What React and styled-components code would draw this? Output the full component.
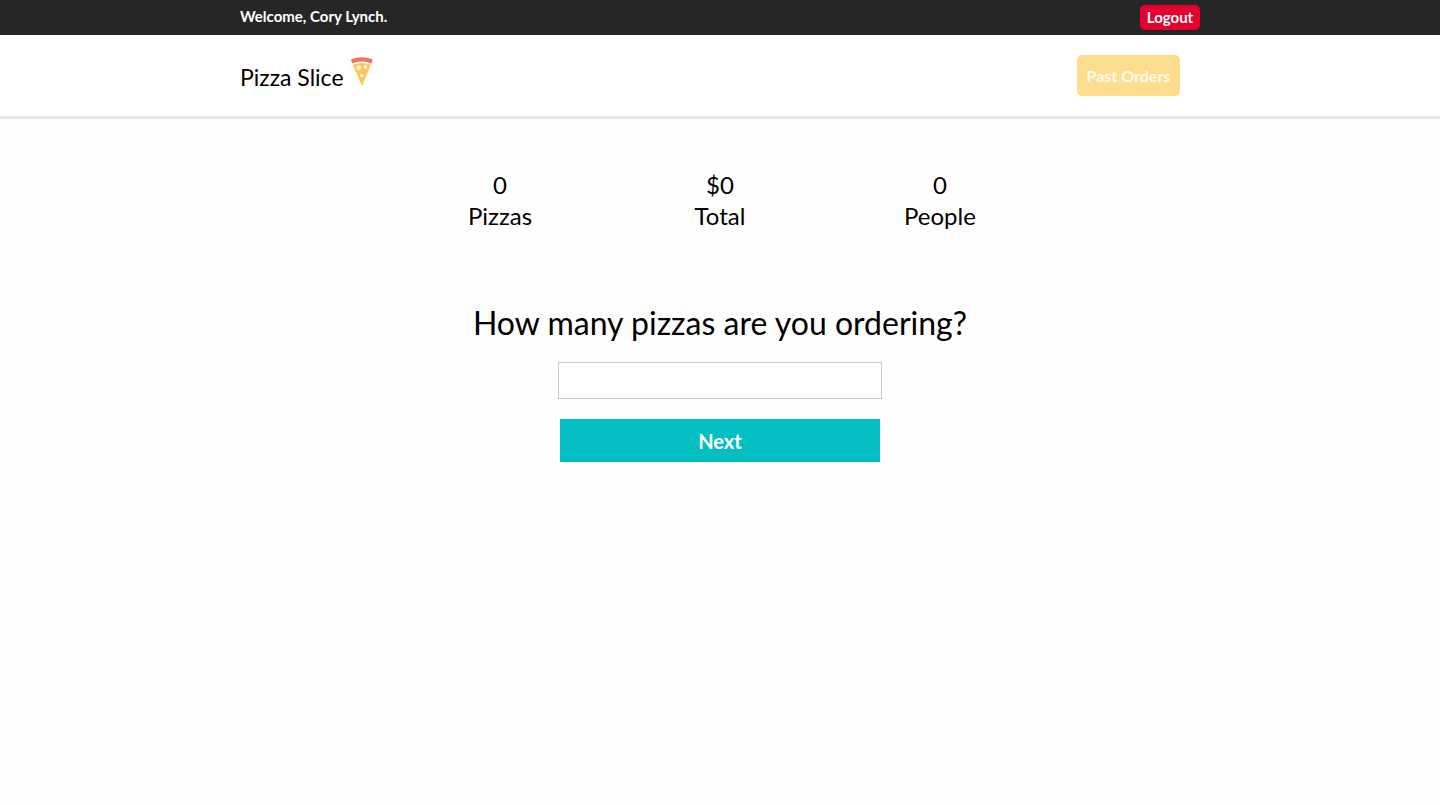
import React from "react";
import styled, { createGlobalStyle } from "styled-components";

const GlobalStyle = createGlobalStyle`
  *, *::before, *::after { box-sizing: border-box; }
  body {
    margin: 0;
    background: #fefefe;
    color: #000;
    font-family: Lato, "Open Sans", sans-serif;
    font-size: 16px;
  }
  p, dl, dd { margin: 0; }
  button, input { font-family: inherit; }
`;

const TopBar = styled.div`
  background: #262626;
  color: #fff;
`;

const Container = styled.div`
  display: flex;
  align-items: flex-start;
  justify-content: space-between;
  width: 100%;
  max-width: 960px;
  margin: 0 auto;
  padding: ${({ $pad }) => $pad};
`;

const Welcome = styled.p`
  font-size: 15px;
  font-weight: 700;
  line-height: 22px;
`;

const LogoutButton = styled.button`
  height: 25px;
  width: 60px;
  padding: 0;
  border: 0;
  border-radius: 5px;
  background: #e6002e;
  color: #fff;
  font-size: 15px;
  font-weight: 700;
  line-height: 25px;
  cursor: pointer;
`;

const Header = styled.header`
  background: #fff;
  border-bottom: 3px solid #e7e7e7;
`;

const Brand = styled.a`
  display: flex;
  align-items: flex-start;
  gap: 7px;
  padding-top: 2px;
  color: #000;
  font-size: 23px;
  line-height: 30px;
  text-decoration: none;
`;

const BrandName = styled.span`
  padding-top: 5px;
`;

const PastOrders = styled.a`
  width: 103px;
  padding: 11px 0 10px;
  border-radius: 5px;
  background: #ffdd8e;
  color: #fffaf0;
  font-size: 16px;
  font-weight: 700;
  line-height: 20px;
  text-align: center;
  text-decoration: none;
`;

const Main = styled.main`
  padding: 50px 20px;
`;

const Stats = styled.dl`
  display: grid;
  grid-template-columns: repeat(3, 1fr);
  max-width: 660px;
  margin: 0 auto;
  font-size: 24px;
  line-height: 31px;
  text-align: center;
`;

const Stat = styled.div`
  display: flex;
  flex-direction: column-reverse;
`;

const OrderForm = styled.form`
  display: flex;
  flex-direction: column;
  align-items: center;
  gap: 20px;
  margin-top: 73px;
`;

const Question = styled.label`
  font-size: 32px;
  line-height: 38px;
  text-align: center;
`;

const CountInput = styled.input`
  width: 324px;
  max-width: 100%;
  height: 37px;
  padding: 0 8px;
  border: 1px solid #c8c8c8;
  border-radius: 0;
  background: #fff;
  font-size: 20px;
`;

const NextButton = styled.button`
  width: 320px;
  max-width: 100%;
  height: 43px;
  padding: 0;
  border: 0;
  background: #04bfc1;
  color: #fff;
  font-size: 20px;
  font-weight: 700;
  cursor: pointer;
`;

const PizzaIcon = () => (
  <svg width="22" height="29" viewBox="0 0 22 29" aria-hidden="true">
    <path d="M0 2.5Q11-2 21.7 2.5L20.6 6.4Q11 2.6 1.2 6.4Z" fill="#f3705d" />
    <path d="M1.8 7.7Q11 4.3 20 7.7L10.9 29Z" fill="#fdc858" />
    <circle cx="7.7" cy="10.7" r="2.2" fill="#fff" />
    <circle cx="14.4" cy="9.9" r="1.8" fill="#fff" />
    <circle cx="10.7" cy="18.6" r="1.6" fill="#fff" />
  </svg>
);

const stats = [
  { label: "Pizzas", value: "0" },
  { label: "Total", value: "$0" },
  { label: "People", value: "0" },
];

export default function App() {
  return (
    <>
      <GlobalStyle />
      <TopBar>
        <Container $pad="5px 0">
          <Welcome>Welcome, Cory Lynch.</Welcome>
          <LogoutButton type="button">Logout</LogoutButton>
        </Container>
      </TopBar>
      <Header>
        <Container $pad="20px 20px 20px 0">
          <Brand href="#">
            <BrandName>Pizza Slice</BrandName>
            <PizzaIcon />
          </Brand>
          <PastOrders href="#orders">Past Orders</PastOrders>
        </Container>
      </Header>
      <Main>
        <Stats>
          {stats.map(({ label, value }) => (
            <Stat key={label}>
              <dt>{label}</dt>
              <dd>{value}</dd>
            </Stat>
          ))}
        </Stats>
        <OrderForm onSubmit={(e) => e.preventDefault()}>
          <Question htmlFor="pizza-count">How many pizzas are you ordering?</Question>
          <CountInput id="pizza-count" type="text" inputMode="numeric" />
          <NextButton type="submit">Next</NextButton>
        </OrderForm>
      </Main>
    </>
  );
}
